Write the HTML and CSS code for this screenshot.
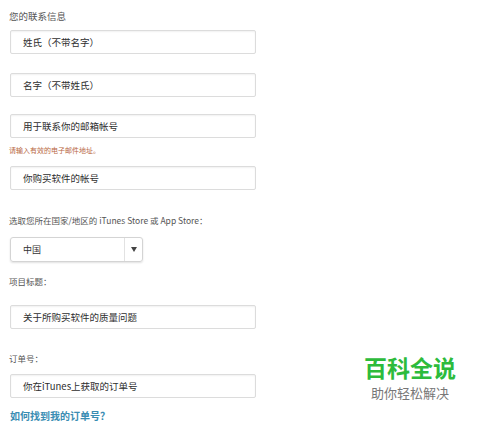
FILE: index.html
```html
<!DOCTYPE html>
<html lang="zh">
<head>
<meta charset="utf-8">
<link rel="stylesheet" href="styles.css">
</head>
<body>
<div class="form">
  <div class="label first">您的联系信息</div>
  <div class="field f1">姓氏（不带名字）</div>
  <div class="field f2">名字（不带姓氏）</div>
  <div class="field f3">用于联系你的邮箱帐号</div>
  <div class="error">请输入有效的电子邮件地址。</div>
  <div class="field f4">你购买软件的帐号</div>
  <div class="label l2">选取您所在国家/地区的 iTunes Store 或 App Store：</div>
  <div class="select">
    <span class="sel-text">中国</span>
    <span class="sel-btn"><svg width="6" height="5" viewBox="0 0 6 5"><path d="M0 0H6L3 5Z" fill="#444"/></svg></span>
  </div>
  <div class="label l3">项目标题：</div>
  <div class="field f5">关于所购买软件的质量问题</div>
  <div class="label l4">订单号：</div>
  <div class="field f6">你在iTunes上获取的订单号</div>
  <div class="link">如何找到我的订单号？</div>
</div>
<div class="watermark">
  <div class="wm-title">百科全说</div>
  <div class="wm-sub">助你轻松解决</div>
</div>
</body>
</html>
```

FILE: styles.css
```css
html, body {
  margin: 0;
  padding: 0;
  background: #fff;
}
body {
  width: 500px;
  height: 428px;
  overflow: hidden;
  position: relative;
  font-family: "Noto Sans CJK SC", "Noto Sans", sans-serif;
}
.form {
  display: flex;
  flex-direction: column;
  align-items: flex-start;
  padding-left: 10px;
}
.label {
  font-size: 8.5px;
  line-height: 12px;
  color: #555;
  margin-left: -1px;
}
.label.first {
  margin-top: 10px;
  font-size: 9.5px;
}
.field {
  box-sizing: border-box;
  width: 246px;
  height: 24px;
  border: 1px solid #dcdcdc;
  border-radius: 2px;
  box-shadow: inset 0 1px 2px rgba(0,0,0,0.06);
  font-size: 9.5px;
  line-height: 22px;
  color: #2e2e2e;
  padding-left: 12px;
}
.f1 { margin-top: 8px; }
.f2 { margin-top: 19px; }
.f3 { margin-top: 17px; }
.error {
  margin-top: 6px;
  font-size: 7px;
  line-height: 12px;
  color: #b8673f;
  margin-left: -1px;
}
.f4 { margin-top: 10px; }
.l2 { margin-top: 24px; }
.select {
  margin-top: 11px;
  box-sizing: border-box;
  width: 133px;
  height: 25px;
  border: 1px solid #d4d4d4;
  border-radius: 3px;
  box-shadow: 0 1px 2px rgba(0,0,0,0.12);
  display: flex;
  align-items: stretch;
}
.sel-text {
  flex: 1;
  font-size: 9px;
  line-height: 23px;
  color: #333;
  padding-left: 12px;
}
.sel-btn {
  width: 17px;
  border-left: 1px solid #e2e2e2;
  display: flex;
  align-items: center;
  justify-content: center;
}
.l3 { margin-top: 13px; }
.f5 { margin-top: 18px; }
.l4 { margin-top: 23px; }
.f6 { margin-top: 10px; }
.link {
  margin-top: 11px;
  font-size: 10px;
  line-height: 14px;
  font-weight: bold;
  color: #3a8db3;
}
.watermark {
  position: absolute;
  left: 364px;
  top: 352px;
  display: flex;
  flex-direction: column;
  align-items: center;
}
.wm-title {
  font-size: 23px;
  line-height: 31px;
  font-weight: bold;
  color: #2dbb3c;
}
.wm-sub {
  font-size: 13px;
  line-height: 19px;
  color: #777;
  margin-top: 0;
}
```
